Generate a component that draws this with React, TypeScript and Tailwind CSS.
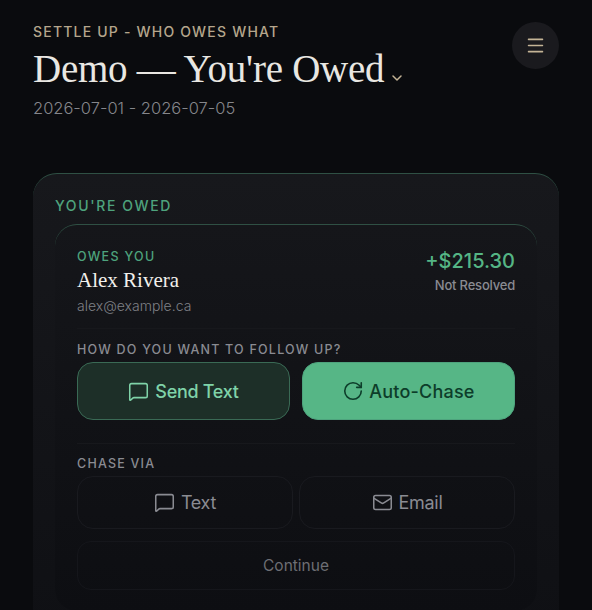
import { ChevronDown, Mail, Menu, MessageSquare, RotateCw } from "lucide-react";

const sans = "font-['Inter','Noto_Sans',sans-serif]";
const serif = "font-['Liberation_Serif',serif]";

export default function App() {
  return (
    <div className={`h-[610px] w-[592px] overflow-hidden bg-[#0a0b0e] ${sans}`}>
      {/* Header */}
      <div className="flex items-start justify-between pl-[33px] pr-[33px] pt-[22px]">
        <div>
          <p className="text-[14px] font-medium leading-[20px] tracking-[1.2px] text-[#b5a68c]">SETTLE UP - WHO OWES WHAT</p>
          <div className="mt-[2px] flex items-end">
            <h1 className={`${serif} text-[39px] leading-[50px] tracking-[-0.25px] text-[#e9e7e2]`}>Demo — You're Owed</h1>
            <ChevronDown className="mb-[8px] ml-[5px] h-[16px] w-[16px] text-[#c4b496]" strokeWidth={2.25} />
          </div>
          <p className="mt-[3px] text-[16.5px] font-light leading-[22px] text-[#85868b]">2026-07-01 - 2026-07-05</p>
        </div>
        <button className="flex h-[47px] w-[47px] items-center justify-center rounded-full bg-[#1a1a1e]">
          <Menu className="h-[21px] w-[21px] text-[#c4b496]" strokeWidth={1.75} />
        </button>
      </div>

      {/* Outer card */}
      <div className="mx-[33px] mt-[54px] h-[460px] rounded-[24px] border-t border-t-[#2f5044] bg-gradient-to-b from-[#17181c] to-[#0f1014] px-[22px] pt-[23px]">
        <p className="text-[14px] font-medium leading-[18px] tracking-[1.62px] text-[#4ea37d]">YOU'RE OWED</p>

        {/* Inner card */}
        <div className="mt-[9px] h-[387px] rounded-[22px] border-t border-t-[#2f5044] bg-gradient-to-b from-[#15161a] to-[#0d0e12] px-[22px] pt-[24px]">
          <div className="flex items-start justify-between border-b border-b-[#17181c] pb-[13px]">
            <div>
              <p className="text-[12.5px] font-medium leading-[16px] tracking-[1.3px] text-[#4ea37d]">OWES YOU</p>
              <p className={`${serif} mt-[2px] text-[21px] leading-[26px] text-[#f2f0ec]`}>Alex Rivera</p>
              <p className="mt-[4px] text-[14px] font-light leading-[18px] text-[#7f8086]">alex@example.ca</p>
            </div>
            <div className="-mt-[1px] flex flex-col items-end">
              <p className="text-[20px] font-medium leading-[26px] tracking-[0px] text-[#55b585]">+$215.30</p>
              <p className="mt-[3px] text-[13px] font-medium leading-[16px] tracking-[-0.2px] text-[#8a8b92]">Not Resolved</p>
            </div>
          </div>

          <p className="mt-[13px] text-[12.5px] font-medium leading-[16px] tracking-[1.22px] text-[#8a8b92]">HOW DO YOU WANT TO FOLLOW UP?</p>
          <div className="mt-[4px] flex gap-[12px] border-b border-b-[#17181c] pb-[23px]">
            <button className="flex h-[58px] flex-1 items-center justify-center gap-[6px] rounded-[16px] border border-[#3a6a55] bg-[#1d2f28] text-[18px] font-medium tracking-[-0.3px] text-[#7fd3a8]">
              <MessageSquare className="h-[21px] w-[21px]" strokeWidth={1.75} />
              Send Text
            </button>
            <button className="flex h-[58px] flex-1 items-center justify-center gap-[5px] rounded-[16px] border border-[#4ea37d] bg-[#56b686] text-[18px] font-medium tracking-[0.2px] text-[#0d3d2a]">
              <RotateCw className="h-[22px] w-[22px]" strokeWidth={1.75} />
              Auto-Chase
            </button>
          </div>

          <p className="mt-[12px] text-[12.5px] font-medium leading-[16px] tracking-[1.22px] text-[#8a8b92]">CHASE VIA</p>
          <div className="mt-[4px] flex gap-[6px]">
            <button className="flex h-[53px] flex-1 items-center justify-center gap-[6px] rounded-[16px] border border-[#191a1f] text-[18px] tracking-[-0.3px] text-[#8a8b92]">
              <MessageSquare className="h-[21px] w-[21px]" strokeWidth={1.75} />
              Text
            </button>
            <button className="flex h-[53px] flex-1 items-center justify-center gap-[6px] rounded-[16px] border border-[#191a1f] text-[18px] tracking-[-0.3px] text-[#8a8b92]">
              <Mail className="h-[21px] w-[21px]" strokeWidth={1.75} />
              Email
            </button>
          </div>
          <button className="mt-[12px] flex h-[49px] w-full items-center justify-center rounded-[14px] border border-[#15161b] text-[15.5px] text-[#6d6e73]">
            Continue
          </button>
        </div>
      </div>
    </div>
  );
}
